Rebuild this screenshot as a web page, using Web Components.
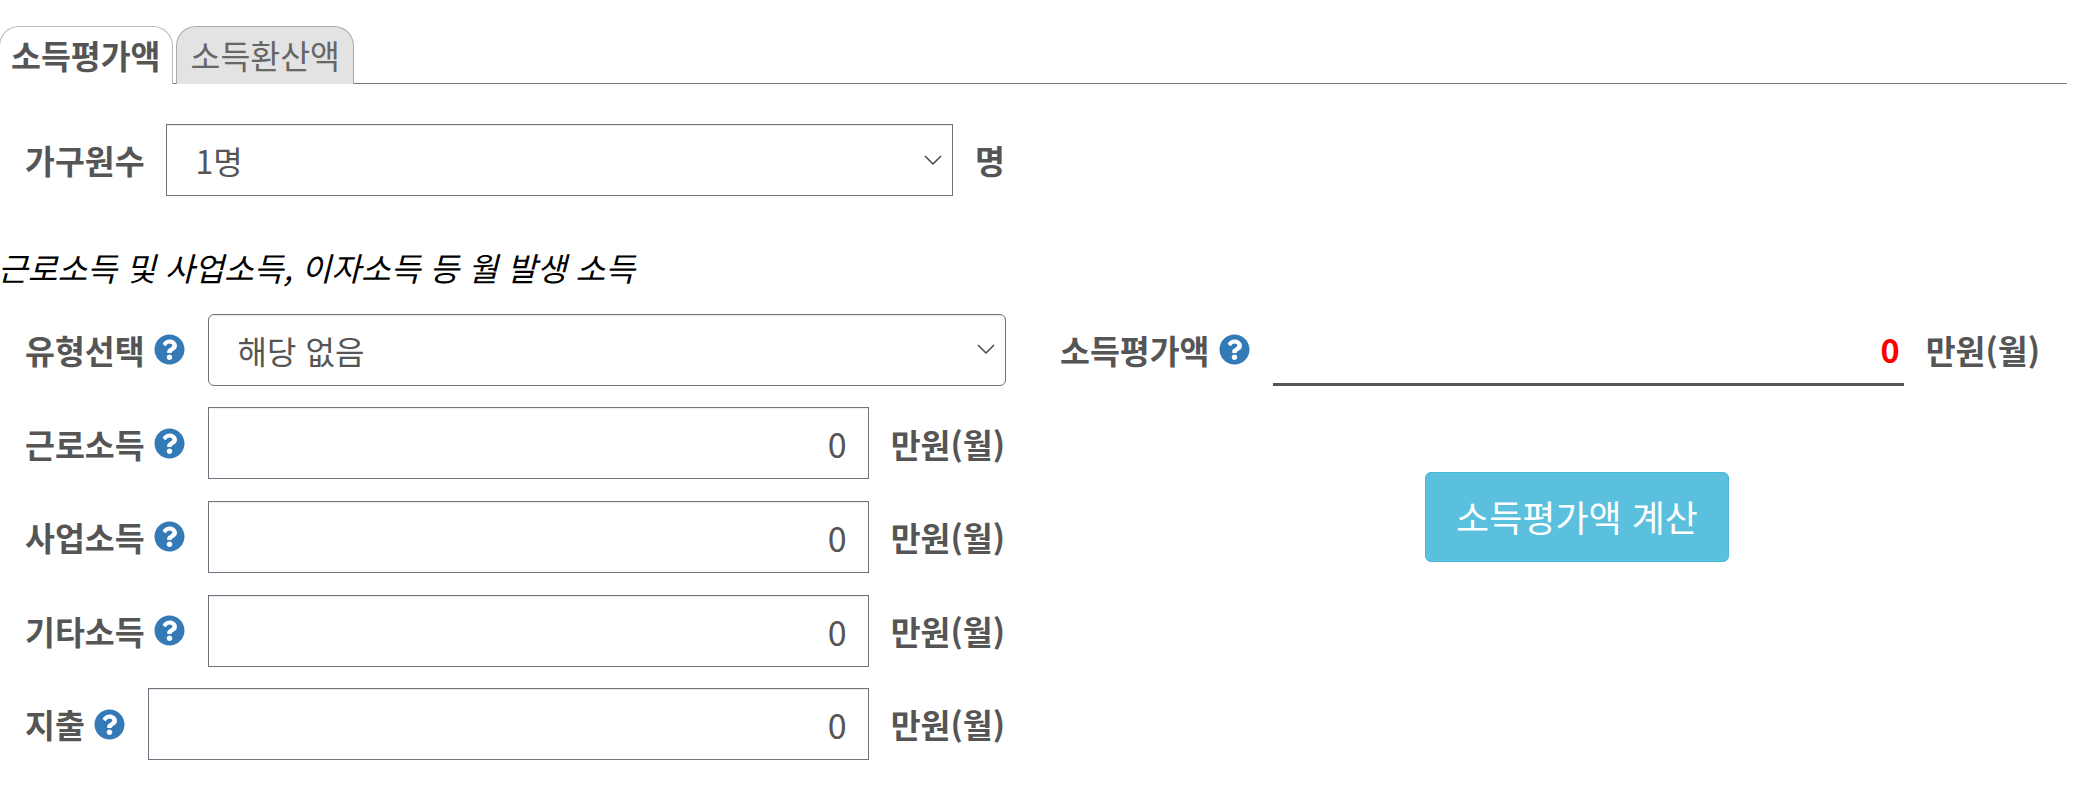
<!DOCTYPE html>
<html lang="ko">
<head>
<meta charset="utf-8">
<title>소득평가액</title>
<style>
  html, body { margin: 0; background: #fff; }
  body {
    font: 400 32.5px/1.4 "Noto Sans CJK KR", "Noto Sans", sans-serif;
    color: #555;
  }
</style>
</head>
<body>
<income-page></income-page>

<script>
const helpIcon = `<svg viewBox="0 0 512 512" width="31" height="31" aria-hidden="true"><path fill="#337ab7" d="M504 256c0 137-111 248-248 248S8 393 8 256 119 8 256 8s248 111 248 248zM262.700 90c-54.500 0-89.300 23-116.500 63.800-3.500 5.300-2.400 12.400 2.700 16.300l34.700 26.300c5.200 3.900 12.600 3 16.700-2.100 17.900-22.700 30.100-35.800 57.300-35.800 20.400 0 45.700 13.100 45.700 32.900 0 15-12.400 22.700-32.500 34-23.500 13.200-54.600 29.600-54.600 70.600V300c0 6.600 5.400 12 12 12h56c6.600 0 12-5.400 12-12v-1.300c0-28.400 83-29.600 83-106.700 0-58-60.200-102-116.500-102zM256 338c-25.400 0-46 20.600-46 46 0 25.400 20.600 46 46 46s46-20.600 46-46c0-25.400-20.600-46-46-46z"/></svg>`

customElements.define('tab-bar', class extends HTMLElement {
  constructor() {
    super()
    this.attachShadow({ mode: 'open' }).innerHTML = `
<style>
  :host {
    display: flex;
    align-items: flex-end;
    gap: 3px;
    height: 58px;
    margin-top: 26px;
    margin-right: 9px;
    box-shadow: inset 0 -1px 0 #777;
  }
</style>
<slot></slot>`
  }
})

customElements.define('tab-item', class extends HTMLElement {
  constructor() {
    super()
    this.attachShadow({ mode: 'open' }).innerHTML = `
<style>
  :host {
    box-sizing: border-box;
    display: block;
    height: 58px;
    padding: 0 13px 0 14px;
    line-height: 56px;
    background: #e3e3e3;
    color: #666;
    border: 1px solid #aaa;
    border-bottom: 0;
    border-radius: 20px 20px 0 0 / 20px 20px 0 0;
  }
  :host([active]) {
    background: #fff;
    color: #555;
    font-weight: 700;
    border-color: #bbb;
    margin-left: -1px;
    padding: 0 11px;
  }
</style>
<slot></slot>`
  }
})

customElements.define('form-field', class extends HTMLElement {
  constructor() {
    super()
    const help = this.hasAttribute('help') ? helpIcon : ''
    this.attachShadow({ mode: 'open' }).innerHTML = `
<style>
  :host {
    display: flex;
    align-items: center;
    height: 72px;
  }
  .label {
    display: flex;
    align-items: center;
    gap: 9px;
    font-weight: 700;
    white-space: nowrap;
    margin-right: var(--label-gap, 23px);
  }
  svg { display: block; }
  .control { flex: 1; min-width: 0; }
  .unit {
    font-weight: 700;
    white-space: nowrap;
    margin: 0 1px 0 22px;
  }
  .unit:empty { display: none; }
</style>
<div class="label"><slot name="label"></slot>${help}</div>
<div class="control"><slot></slot></div>
<div class="unit">${this.getAttribute('unit') || ''}</div>`
  }
})

customElements.define('select-box', class extends HTMLElement {
  constructor() {
    super()
    this.attachShadow({ mode: 'open' }).innerHTML = `
<style>
  :host {
    box-sizing: border-box;
    display: flex;
    align-items: center;
    justify-content: space-between;
    height: 72px;
    padding: 0 10px 0 29px;
    border: 1px solid #6c757d;
    background: #fff;
    box-shadow: inset 0 1px 1px rgba(0, 0, 0, .075);
    font-size: 32px;
    line-height: 74px;
  }
  :host([rounded]) { border-radius: 6px; }
  svg { display: block; }
</style>
<span><slot></slot></span>
<svg width="18" height="11" viewBox="0 0 18 11" aria-hidden="true"><path d="M1 1l8 8 8-8" fill="none" stroke="#444" stroke-width="1.5"/></svg>`
  }
})

customElements.define('number-box', class extends HTMLElement {
  constructor() {
    super()
    this.attachShadow({ mode: 'open' }).innerHTML = `
<style>
  :host {
    box-sizing: border-box;
    display: block;
    height: 72px;
    padding: 0 21px;
    border: 1px solid #6c757d;
    background: #fff;
    box-shadow: inset 0 1px 1px rgba(0, 0, 0, .075);
    text-align: right;
    font-size: 34px;
    line-height: 72px;
  }
</style>
<slot></slot>`
  }
})

customElements.define('result-box', class extends HTMLElement {
  constructor() {
    super()
    this.attachShadow({ mode: 'open' }).innerHTML = `
<style>
  :host {
    box-sizing: border-box;
    display: block;
    height: 72px;
    padding-right: 4px;
    border-bottom: 3px solid #555;
    text-align: right;
    line-height: 70px;
    font-weight: 700;
    color: #f00;
  }
</style>
<slot></slot>`
  }
})

customElements.define('action-button', class extends HTMLElement {
  constructor() {
    super()
    this.attachShadow({ mode: 'open' }).innerHTML = `
<style>
  :host {
    box-sizing: border-box;
    display: inline-block;
    height: 90px;
    padding: 0 30.5px;
    font-size: 36px;
    line-height: 86px;
    color: #fff;
    background: #5bc0de;
    border: 1px solid #46b8da;
    border-radius: 6px;
    white-space: nowrap;
  }
</style>
<slot></slot>`
  }
})

customElements.define('income-page', class extends HTMLElement {
  constructor() {
    super()
    this.attachShadow({ mode: 'open' }).innerHTML = `
<style>
  :host { display: block; }
  .household { --label-gap: 21px; width: 981px; margin: 40px 0 0 25px; }
  .note {
    margin: 49px 0 24.8px -2px;
    font-size: 32.3px;
    font-style: italic;
    color: #000;
    line-height: 44px;
  }
  .columns { display: grid; grid-template-columns: 1038px 1038px; }
  .left {
    display: grid;
    row-gap: 21.6px;
    padding: 0 32px 0 25px;
    align-content: start;
  }
  .right { padding-left: 22px; padding-right: 35px; }
  .action { display: flex; justify-content: center; margin: 86px -35px 0 18px; }
</style>
<tab-bar>
  <tab-item active>소득평가액</tab-item>
  <tab-item>소득환산액</tab-item>
</tab-bar>
<form-field class="household" unit="명">
  <span slot="label">가구원수</span>
  <select-box>1명</select-box>
</form-field>
<div class="note">근로소득 및 사업소득, 이자소득 등 월 발생 소득</div>
<div class="columns">
  <div class="left">
    <form-field help>
      <span slot="label">유형선택</span>
      <select-box rounded>해당 없음</select-box>
    </form-field>
    <form-field help unit="만원(월)">
      <span slot="label">근로소득</span>
      <number-box>0</number-box>
    </form-field>
    <form-field help unit="만원(월)">
      <span slot="label">사업소득</span>
      <number-box>0</number-box>
    </form-field>
    <form-field help unit="만원(월)">
      <span slot="label">기타소득</span>
      <number-box>0</number-box>
    </form-field>
    <form-field help unit="만원(월)">
      <span slot="label">지출</span>
      <number-box>0</number-box>
    </form-field>
  </div>
  <div class="right">
    <form-field help unit="만원(월)">
      <span slot="label">소득평가액</span>
      <result-box>0</result-box>
    </form-field>
    <div class="action"><action-button>소득평가액 계산</action-button></div>
  </div>
</div>`
  }
})
</script>
</body>
</html>
